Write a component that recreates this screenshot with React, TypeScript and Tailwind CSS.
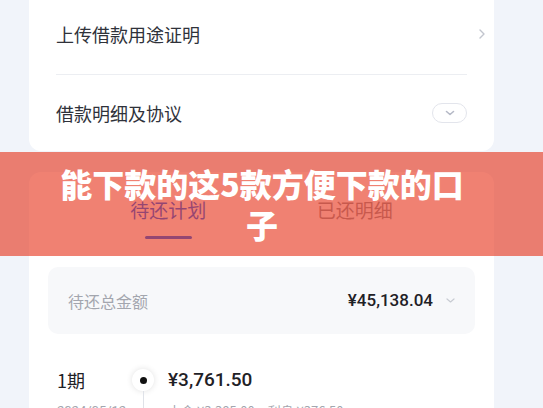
export default function App() {
  return (
    <div className="relative h-[408px] w-[543px] overflow-hidden bg-[#f1f4fa] font-['Noto_Sans_CJK_SC',sans-serif]">
      <div className="ml-[29px] w-[465px]">
        {/* Card 1 */}
        <div className="rounded-b-[12px] bg-white px-[27px]">
          <div className="relative flex h-[74px] items-center pb-[6px] text-[18px] text-[#2f323a]">
            <span>上传借款用途证明</span>
            <svg className="absolute right-[-18px] top-[29px]" width="6" height="10" viewBox="0 0 6 10" fill="none">
              <path d="M1 1l4 4-4 4" stroke="#c2c5ce" strokeWidth="1.4" strokeLinecap="round" strokeLinejoin="round" />
            </svg>
          </div>
          <div className="h-px bg-[#eceef2]" />
          <div className="flex h-[76px] items-center justify-between text-[18px] text-[#2f323a]">
            <span>借款明细及协议</span>
            <div className="flex h-[20px] w-[35px] items-center justify-center rounded-full border border-[#e3e5ec]">
              <svg width="10" height="6" viewBox="0 0 10 6" fill="none">
                <path d="M1.5 1.5L5 4.5l3.5-3" stroke="#b5b9c6" strokeWidth="1.6" strokeLinecap="round" strokeLinejoin="round" />
              </svg>
            </div>
          </div>
        </div>

        {/* Card 2 */}
        <div className="mt-[21px] rounded-t-[12px] bg-white px-[19px] pt-[26px] pb-[40px]">
          <div className="flex px-[27px]">
            <div className="flex flex-1 flex-col items-center">
              <span className="text-[19px] leading-[24px] text-[#1a6dff]">待还计划</span>
              <div className="mt-[14px] h-[3px] w-[47px] rounded-full bg-[#1a6dff]" />
            </div>
            <div className="flex flex-1 flex-col items-center">
              <span className="text-[19px] leading-[24px] text-[#999ba3]">已还明细</span>
              <div className="mt-[14px] h-[3px] w-[47px]" />
            </div>
          </div>

          <div className="mt-[28px] flex h-[67px] items-center justify-between rounded-[10px] bg-[#f7f8fa] px-[20px]">
            <span className="text-[16px] text-[#a3a6ae]">待还总金额</span>
            <div className="flex items-center gap-[13px]">
              <span className="font-['Roboto',sans-serif] text-[17px] font-medium text-[#1f2126]">¥45,138.04</span>
              <svg width="9" height="5" viewBox="0 0 9 5" fill="none">
                <path d="M1 1l3.5 3L8 1" stroke="#c8cbd2" strokeWidth="1.2" strokeLinecap="round" strokeLinejoin="round" />
              </svg>
            </div>
          </div>

          <div className="mt-[35px] flex items-start pl-[9px]">
            <div className="flex w-[75px] flex-col">
              <span className="text-[18px] leading-[22px] text-[#1f2126]">1期</span>
              <span className="mt-[12px] font-['Roboto',sans-serif] text-[13px] leading-[16px] text-[#a3a6ae]">2024/05/12</span>
            </div>
            <div className="flex w-[22px] flex-col items-center">
              <div className="flex h-[22px] w-[22px] items-center justify-center rounded-full bg-white shadow-[0_0_6px_rgba(0,0,0,0.12)]">
                <div className="h-[7px] w-[7px] rounded-full bg-[#111]" />
              </div>
              <div className="h-[40px] w-px bg-[#dfe2e8]" />
            </div>
            <div className="ml-[14px] flex flex-col">
              <span className="font-['Roboto',sans-serif] text-[19px] font-medium leading-[22px] text-[#1f2126]">¥3,761.50</span>
              <span className="mt-[12px] text-[13px] leading-[16px] text-[#a3a6ae]">本金 ¥3,385.00　利息 ¥376.50</span>
            </div>
          </div>
        </div>
      </div>

      {/* Banner overlay */}
      <div className="absolute left-0 top-[152px] flex h-[104px] w-full items-center justify-center bg-[rgba(230,45,20,0.6)] pl-[50px] pr-[69px]">
        <p className="text-center text-[32px] font-black leading-[41px] text-white">能下款的这5款方便下款的口子</p>
      </div>
    </div>
  );
}
